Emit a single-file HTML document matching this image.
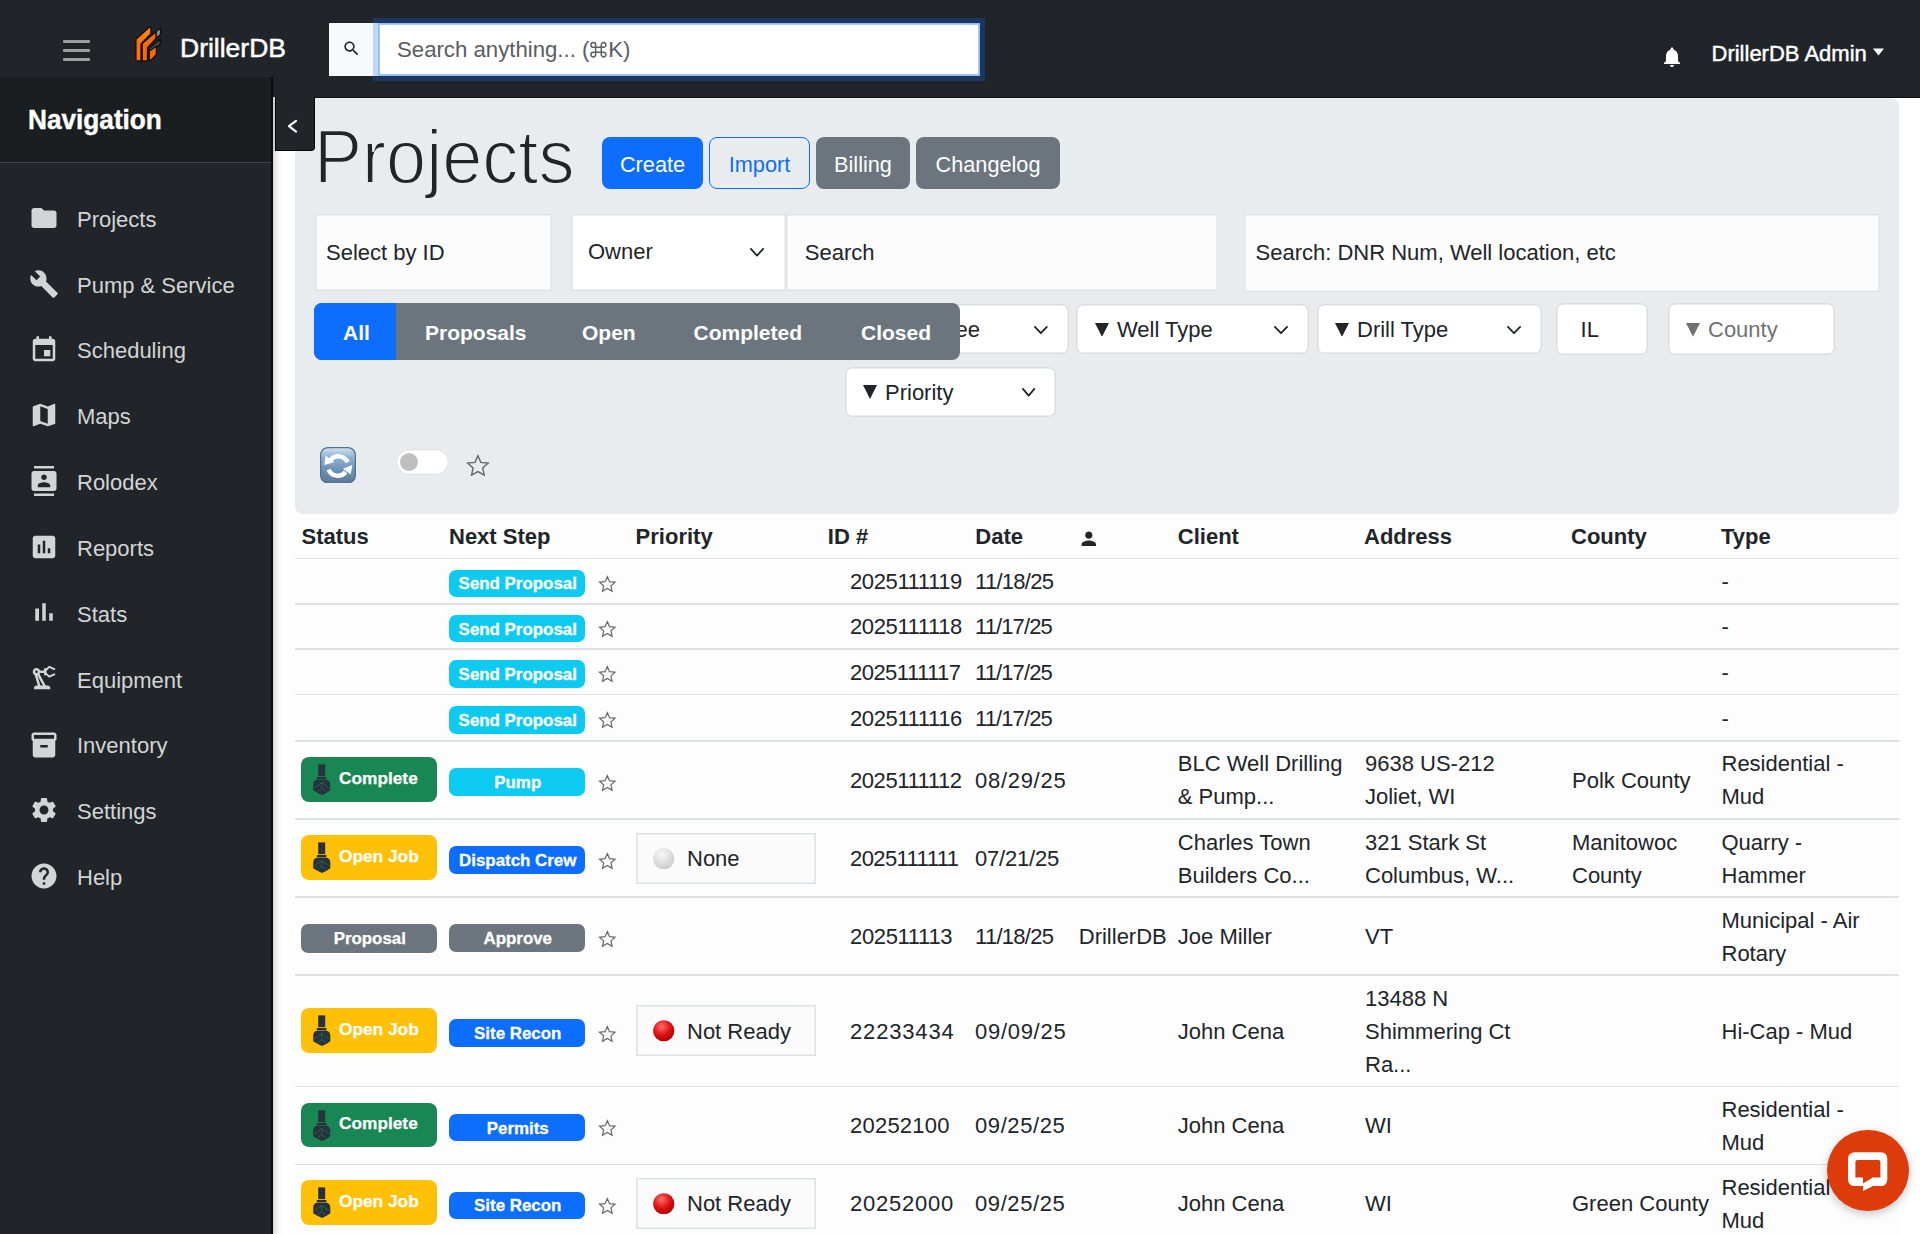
<!DOCTYPE html>
<html><head><meta charset="utf-8"><title>DrillerDB - Projects</title>
<style>
html,body{margin:0;padding:0;width:1920px;height:1234px;overflow:hidden;background:#ffffff}
body{position:relative;font-family:"Liberation Sans",sans-serif}
.a{position:absolute;display:block}
.t{position:absolute;line-height:1;white-space:nowrap}
</style></head><body>
<div class="a" style="left:0.00px;top:0.00px;width:1920.00px;height:1234.00px;background:#ffffff"></div>
<div class="a" style="left:295.00px;top:514.00px;width:1604.00px;height:720.00px;background:#fdfdfd"></div>
<div class="a" style="left:0.00px;top:0.00px;width:1920.00px;height:97.00px;background:#212529"></div>
<div class="a" style="left:0.00px;top:96.50px;width:1920.00px;height:1.50px;background:#0b0c0d"></div>
<div class="a" style="left:63.00px;top:40.25px;width:27.00px;height:2.50px;background:#9c9ea0;border-radius:1px"></div>
<div class="a" style="left:63.00px;top:49.25px;width:27.00px;height:2.50px;background:#9c9ea0;border-radius:1px"></div>
<div class="a" style="left:63.00px;top:58.25px;width:27.00px;height:2.50px;background:#9c9ea0;border-radius:1px"></div>
<svg class="a" style="left:133.00px;top:24.00px;" width="30.00" height="40.00" viewBox="133 24 30 40"><defs><linearGradient id="lg1" x1="0" y1="0" x2="1" y2="0"><stop offset="0" stop-color="#ff6a00"/><stop offset="1" stop-color="#ff8a10"/></linearGradient></defs><g stroke="#0e1114" stroke-width="1.3" stroke-linejoin="round"><polygon fill="url(#lg1)" points="135.9,39.2 149.6,26.9 150.9,27.4 150.9,33.8 141,43.9 141,60.9 135.9,60.9"/><polygon fill="#ff6a00" points="142.2,43.6 156.2,31.5 156.2,38.2 147.5,47.6 147.5,60.9 142.2,60.9"/><polygon fill="#8d8d8d" points="156.2,31.5 160.5,27.8 160.5,34.4 156.2,38.2"/><polygon fill="#444" points="149,48.3 160.3,39.1 160.3,44.2 156.4,47.4 149.3,51"/><polygon fill="#ff6a00" points="149.3,51 156.4,46.2 156.4,54.4 150.1,60.9 149.3,60.9"/></g></svg>
<div class="t" style="left:180.00px;top:35.06px;font-size:26.5px;color:#ffffff;-webkit-text-stroke:0.5px #fff">DrillerDB</div>
<div class="a" style="left:373.00px;top:18.00px;width:612.00px;height:63.00px;background:#1c375e"></div>
<div class="a" style="left:329.00px;top:23.00px;width:44.00px;height:53.00px;background:#f8f9fa"></div>
<div class="a" style="left:373.00px;top:23.00px;width:5.00px;height:53.00px;background:#bfd7f8"></div>
<div class="a" style="left:378.00px;top:23.00px;width:602.00px;height:53.00px;background:#fff;box-shadow:inset 0 0 0 1.8px #8cbbfe"></div>
<svg class="a" style="left:342.00px;top:39.00px;" width="19.00" height="19.00" viewBox="0 0 24 24"><path fill="#212529" d="M15.5 14h-.79l-.28-.27C15.41 12.59 16 11.11 16 9.5 16 5.91 13.09 3 9.5 3S3 5.91 3 9.5 5.91 16 9.5 16c1.61 0 3.09-.59 4.23-1.57l.27.28v.79l5 4.99L20.49 19l-4.99-5zm-6 0C7.01 14 5 11.99 5 9.5S7.01 5 9.5 5 14 7.01 14 9.5 11.99 14 9.5 14z"/></svg>
<div class="t" style="left:397.00px;top:39.20px;font-size:22.2px;color:#5a5d61;">Search anything... (</div>
<svg class="a" style="left:588.00px;top:40.00px;" width="22.00" height="20.00" viewBox="588 40 22 20"><path d="M595.65 47.25 V44.9 A2.35 2.35 0 1 0 593.3 47.25 H603.6 A2.35 2.35 0 1 0 601.25 44.9 V54.6 A2.35 2.35 0 1 0 603.6 52.25 H593.3 A2.35 2.35 0 1 0 595.65 54.6 Z" fill="none" stroke="#5a5d61" stroke-width="1.45" stroke-linejoin="round"/></svg>
<div class="t" style="left:608.30px;top:39.20px;font-size:22.2px;color:#5a5d61;">K)</div>
<svg class="a" style="left:1660.00px;top:45.00px;" width="24.00" height="24.00" viewBox="0 0 24 24"><path fill="#fff" d="M12 22c1.1 0 2-.9 2-2h-4c0 1.1.89 2 2 2zm6-6v-5c0-3.07-1.64-5.64-4.5-6.32V4c0-.83-.67-1.5-1.5-1.5s-1.5.67-1.5 1.5v.68C7.63 5.36 6 7.92 6 11v5l-2 2v1h16v-1l-2-2z"/></svg>
<div class="t" style="left:1711.50px;top:42.87px;font-size:22px;color:#ffffff;-webkit-text-stroke:0.45px #fff">DrillerDB Admin</div>
<svg class="a" style="left:1872.00px;top:47.00px;" width="13.00" height="9.00" viewBox="0 0 13 9"><polygon fill="#fff" points="1,1.4 12,1.4 6.5,8.4"/></svg>
<div class="a" style="left:0.00px;top:77.00px;width:274.00px;height:85.00px;background:#1b1e21"></div>
<div class="a" style="left:0.00px;top:161.50px;width:272.00px;height:1.50px;background:#3d4348"></div>
<div class="a" style="left:0.00px;top:163.00px;width:273.00px;height:1071.00px;background:#212529"></div>
<div class="a" style="left:271.00px;top:77.00px;width:2.00px;height:1157.00px;background:#0a0d10"></div>
<div class="a" style="left:273.00px;top:97.00px;width:2.00px;height:53.00px;background:#cdcdcd"></div>
<div class="a" style="left:273.00px;top:150.00px;width:22.00px;height:1084.00px;background:linear-gradient(to right,#d6d6d6,#eeeeee 3px,#fafafa 7px,#fefefe 10px,#fefefe)"></div>
<div class="t" style="left:28.00px;top:107.32px;font-size:26.2px;color:#ffffff;font-weight:700;-webkit-text-stroke:0.4px #fff;transform:scaleY(1.08);transform-origin:0 21.7px">Navigation</div>
<svg class="a" style="left:28.80px;top:202.90px;" width="30.00" height="30.00" viewBox="0 0 24 24"><path fill="#d3d4d5" d="M10 4H4c-1.1 0-1.99.9-1.99 2L2 18c0 1.1.9 2 2 2h16c1.1 0 2-.9 2-2V8c0-1.1-.9-2-2-2h-8l-2-2z"/></svg>
<div class="t" style="left:77.00px;top:208.67px;font-size:22px;color:#d3d4d5;">Projects</div>
<svg class="a" style="left:28.80px;top:268.50px;" width="30.00" height="30.00" viewBox="0 0 24 24"><path fill="#d3d4d5" d="M22.7 19l-9.1-9.1c.9-2.3.4-5-1.5-6.9-2-2-5-2.4-7.4-1.3L9 6 6 9 1.6 4.7C.4 7.1.9 10.1 2.9 12.1c1.9 1.9 4.6 2.4 6.9 1.5l9.1 9.1c.4.4 1 .4 1.4 0l2.3-2.3c.5-.4.5-1.1.1-1.4z"/></svg>
<div class="t" style="left:77.00px;top:274.52px;font-size:22px;color:#d3d4d5;">Pump &amp; Service</div>
<svg class="a" style="left:28.80px;top:335.00px;" width="30.00" height="30.00" viewBox="0 0 24 24"><path fill="#d3d4d5" d="M17 12h-5v5h5v-5zM16 1v2H8V1H6v2H5c-1.11 0-1.99.9-1.99 2L3 19c0 1.1.89 2 2 2h14c1.1 0 2-.9 2-2V5c0-1.1-.9-2-2-2h-1V1h-2zm3 18H5V8h14v11z"/></svg>
<div class="t" style="left:77.00px;top:340.37px;font-size:22px;color:#d3d4d5;">Scheduling</div>
<svg class="a" style="left:28.80px;top:400.20px;" width="30.00" height="30.00" viewBox="0 0 24 24"><path fill="#d3d4d5" d="M20.5 3l-.16.03L15 5.1 9 3 3.36 4.9c-.21.07-.36.25-.36.48V20.5c0 .28.22.5.5.5l.16-.03L9 18.9l6 2.1 5.64-1.9c.21-.07.36-.25.36-.48V3.5c0-.28-.22-.5-.5-.5zM15 19l-6-2.11V5l6 2.11V19z"/></svg>
<div class="t" style="left:77.00px;top:406.22px;font-size:22px;color:#d3d4d5;">Maps</div>
<svg class="a" style="left:28.80px;top:465.80px;" width="30.00" height="30.00" viewBox="0 0 24 24"><path fill="#d3d4d5" d="M20 0H4v2h16V0zM4 24h16v-2H4v2zM20 4H4c-1.1 0-2 .9-2 2v12c0 1.1.9 2 2 2h16c1.1 0 2-.9 2-2V6c0-1.1-.9-2-2-2zm-8 2.75c1.24 0 2.25 1.01 2.25 2.25s-1.01 2.25-2.25 2.25S9.75 10.24 9.75 9 10.76 6.75 12 6.75zM17 17H7v-1.5c0-1.67 3.33-2.5 5-2.5s5 .83 5 2.5V17z"/></svg>
<div class="t" style="left:77.00px;top:472.07px;font-size:22px;color:#d3d4d5;">Rolodex</div>
<svg class="a" style="left:28.80px;top:532.25px;" width="30.00" height="30.00" viewBox="0 0 24 24"><path fill="#d3d4d5" d="M19 3H5c-1.1 0-2 .9-2 2v14c0 1.1.9 2 2 2h14c1.1 0 2-.9 2-2V5c0-1.1-.9-2-2-2zM9 17H7v-7h2v7zm4 0h-2V7h2v10zm4 0h-2v-4h2v4z"/></svg>
<div class="t" style="left:77.00px;top:537.92px;font-size:22px;color:#d3d4d5;">Reports</div>
<svg class="a" style="left:28.80px;top:596.85px;" width="30.00" height="30.00" viewBox="0 0 24 24"><path fill="#d3d4d5" d="M5 9.2h3V19H5zM10.6 5h2.8v14h-2.8zm5.6 8H19v6h-2.8z"/></svg>
<div class="t" style="left:77.00px;top:603.77px;font-size:22px;color:#d3d4d5;">Stats</div>
<svg class="a" style="left:28.80px;top:663.40px;" width="30.00" height="30.00" viewBox="0 0 24 24"><path fill="#d3d4d5" d="M19.93 8.35l-3.6 1.68L14 7.7V6.3l2.33-2.33 3.6 1.68c.38.18.82.01 1-.36.18-.38.01-.82-.36-1l-3.92-1.83c-.38-.18-.83-.1-1.13.2L13.78 4.4c-.18-.24-.46-.4-.78-.4-.55 0-1 .45-1 1v1H8.82C8.4 4.84 7.3 4 6 4 4.34 4 3 5.34 3 7c0 1.1.6 2.05 1.48 2.58L7.08 18H6c-1.1 0-2 .9-2 2v1h13v-1c0-1.1-.9-2-2-2h-1.62L8.41 8.77c.17-.24.31-.49.41-.77H12v1c0 .55.45 1 1 1 .32 0 .6-.16.78-.4l1.74 1.74c.3.3.75.38 1.13.2l3.92-1.83c.38-.18.54-.62.36-1-.18-.37-.62-.54-1-.36zM6 8c-.55 0-1-.45-1-1s.45-1 1-1 1 .45 1 1-.45 1-1 1zm5.11 10H9.17l-2.46-8h.1l4.3 8z"/></svg>
<div class="t" style="left:77.00px;top:669.62px;font-size:22px;color:#d3d4d5;">Equipment</div>
<svg class="a" style="left:28.80px;top:729.60px;" width="30.00" height="30.00" viewBox="0 0 24 24"><path fill="#d3d4d5" d="M20 2H4c-1 0-2 .9-2 2v3.01c0 .72.43 1.34 1 1.69V20c0 1.1 1.1 2 2 2h14c.9 0 2-.9 2-2V8.7c.57-.35 1-.97 1-1.69V4c0-1.1-1-2-2-2zm-5 12H9v-2h6v2zm5-7H4V4l16-.02V7z"/></svg>
<div class="t" style="left:77.00px;top:735.47px;font-size:22px;color:#d3d4d5;">Inventory</div>
<svg class="a" style="left:28.80px;top:795.40px;" width="30.00" height="30.00" viewBox="0 0 24 24"><path fill="#d3d4d5" d="M19.14 12.94c.04-.3.06-.61.06-.94 0-.32-.02-.64-.07-.94l2.03-1.58c.18-.14.23-.41.12-.61l-1.92-3.32c-.12-.22-.37-.29-.59-.22l-2.39.96c-.5-.38-1.03-.7-1.62-.94l-.36-2.54c-.04-.24-.24-.41-.48-.41h-3.84c-.24 0-.43.17-.47.41l-.36 2.54c-.59.24-1.13.57-1.62.94l-2.39-.96c-.22-.08-.47 0-.59.22L2.74 8.87c-.12.21-.08.47.12.61l2.03 1.58c-.05.3-.09.63-.09.94s.02.64.07.94l-2.03 1.58c-.18.14-.23.41-.12.61l1.92 3.32c.12.22.37.29.59.22l2.39-.96c.5.38 1.03.7 1.62.94l.36 2.54c.05.24.24.41.48.41h3.84c.24 0 .44-.17.47-.41l.36-2.54c.59-.24 1.13-.56 1.62-.94l2.39.96c.22.08.47 0 .59-.22l1.92-3.32c.12-.22.07-.47-.12-.61l-2.01-1.58zM12 15.6c-1.98 0-3.6-1.62-3.6-3.6s1.62-3.6 3.6-3.6 3.6 1.62 3.6 3.6-1.62 3.6-3.6 3.6z"/></svg>
<div class="t" style="left:77.00px;top:801.32px;font-size:22px;color:#d3d4d5;">Settings</div>
<svg class="a" style="left:28.80px;top:861.00px;" width="30.00" height="30.00" viewBox="0 0 24 24"><path fill="#d3d4d5" d="M12 2C6.48 2 2 6.48 2 12s4.48 10 10 10 10-4.48 10-10S17.52 2 12 2zm1 17h-2v-2h2v2zm2.07-7.75l-.9.92C13.45 12.9 13 13.5 13 15h-2v-.5c0-1.1.45-2.1 1.17-2.83l1.24-1.26c.37-.36.59-.86.59-1.41 0-1.1-.9-2-2-2s-2 .9-2 2H8c0-2.21 1.79-4 4-4s4 1.79 4 4c0 .88-.36 1.68-.93 2.25z"/></svg>
<div class="t" style="left:77.00px;top:867.17px;font-size:22px;color:#d3d4d5;">Help</div>
<div class="a" style="left:295.00px;top:98.00px;width:1604.00px;height:415.50px;background:#e9ecef;border-radius:0 8px 8px 8px"></div>
<div class="a" style="left:275.00px;top:97.00px;width:40.00px;height:53.50px;background:#212529;border:1.3px solid #050505;border-top:none;border-radius:0 0 4px 0;box-sizing:border-box"></div>
<svg class="a" style="left:284.00px;top:116.00px;" width="16.00" height="20.00" viewBox="284 116 16 20"><polyline points="296,120.8 289,126.2 296,131.6" fill="none" stroke="#fff" stroke-width="2.2" stroke-linecap="round" stroke-linejoin="round"/></svg>
<div class="t" style="left:314.00px;top:122.45px;font-size:72.1px;color:#212529;-webkit-text-stroke:1.8px #e9ecef;transform:scaleY(1.065);transform-origin:0 61.05px">Projects</div>
<div class="a" style="left:602.00px;top:137.00px;width:101.00px;height:52.00px;background:#0d6efd;border-radius:8px"></div>
<div class="t" style="left:602.00px;top:154.13px;width:101.00px;text-align:center;font-size:21.7px;color:#fff;">Create</div>
<div class="a" style="left:709.00px;top:137.00px;width:101.00px;height:52.00px;border:1.5px solid #0d6efd;border-radius:8px;box-sizing:border-box"></div>
<div class="t" style="left:709.00px;top:154.13px;width:101.00px;text-align:center;font-size:21.7px;color:#0d6efd;">Import</div>
<div class="a" style="left:816.00px;top:137.00px;width:94.00px;height:52.00px;background:#6c757d;border-radius:8px"></div>
<div class="t" style="left:816.00px;top:154.13px;width:94.00px;text-align:center;font-size:21.7px;color:#fff;">Billing</div>
<div class="a" style="left:916.00px;top:137.00px;width:144.00px;height:52.00px;background:#6c757d;border-radius:8px"></div>
<div class="t" style="left:916.00px;top:154.13px;width:144.00px;text-align:center;font-size:21.7px;color:#fff;">Changelog</div>
<div class="a" style="left:314.50px;top:213.50px;width:237.50px;height:77.50px;background:#fcfcfc;box-shadow:inset 0 0 0 1.5px #dfe2e6;"></div>
<div class="t" style="left:326.00px;top:242.27px;font-size:22px;color:#212529;">Select by ID</div>
<div class="a" style="left:571.00px;top:213.50px;width:215.00px;height:77.50px;background:#ffffff;box-shadow:inset 0 0 0 1.5px #dfe2e6;"></div>
<div class="t" style="left:588.00px;top:241.17px;font-size:22px;color:#212529;">Owner</div>
<svg class="a" style="left:748.00px;top:246.00px" width="18.00" height="12.50" viewBox="748 246 18 12.5"><polyline points="750.90,248.90 757.00,255.60 763.10,248.90" fill="none" stroke="#212529" stroke-width="1.8" stroke-linecap="round" stroke-linejoin="round"/></svg>
<div class="a" style="left:786.00px;top:213.50px;width:432.30px;height:77.50px;background:#fcfcfc;box-shadow:inset 0 0 0 1.5px #dfe2e6;"></div>
<div class="t" style="left:804.80px;top:241.87px;font-size:22px;color:#212529;">Search</div>
<div class="a" style="left:1244.00px;top:213.50px;width:635.60px;height:78.00px;background:#fcfcfc;box-shadow:inset 0 0 0 1.5px #dfe2e6;"></div>
<div class="t" style="left:1255.50px;top:242.07px;font-size:22px;color:#212529;">Search: DNR Num, Well location, etc</div>
<div class="a" style="left:860.00px;top:304.00px;width:208.50px;height:49.50px;background:#fff;border-radius:7px;box-shadow:inset 0 0 0 1.5px #d9dce0;"></div>
<div class="t" style="right:940.00px;top:318.87px;font-size:22px;color:#212529;">Assignee</div>
<svg class="a" style="left:1032.00px;top:323.50px" width="17.70" height="12.00" viewBox="1032 323.5 17.700000000000045 12.0"><polyline points="1034.90,326.40 1040.85,332.60 1046.80,326.40" fill="none" stroke="#212529" stroke-width="1.8" stroke-linecap="round" stroke-linejoin="round"/></svg>
<div class="a" style="left:1076.00px;top:304.30px;width:232.70px;height:49.50px;background:#fff;border-radius:7px;box-shadow:inset 0 0 0 1.5px #d9dce0;"></div>
<svg class="a" style="left:1095.00px;top:322.50px" width="14.00" height="13.90" viewBox="0 0 14.00 13.90"><polygon points="0,0 14.00,0 7.00,13.90" fill="#212529"/></svg>
<div class="t" style="left:1117.00px;top:318.87px;font-size:22px;color:#212529;">Well Type</div>
<svg class="a" style="left:1272.00px;top:323.50px" width="18.00" height="12.00" viewBox="1272 323.5 18 12.0"><polyline points="1274.90,326.40 1281.00,332.60 1287.10,326.40" fill="none" stroke="#212529" stroke-width="1.8" stroke-linecap="round" stroke-linejoin="round"/></svg>
<div class="a" style="left:1316.50px;top:304.30px;width:225.30px;height:49.50px;background:#fff;border-radius:7px;box-shadow:inset 0 0 0 1.5px #d9dce0;"></div>
<svg class="a" style="left:1335.00px;top:322.50px" width="14.00" height="13.90" viewBox="0 0 14.00 13.90"><polygon points="0,0 14.00,0 7.00,13.90" fill="#212529"/></svg>
<div class="t" style="left:1357.00px;top:318.87px;font-size:22px;color:#212529;">Drill Type</div>
<svg class="a" style="left:1505.00px;top:323.50px" width="18.00" height="12.00" viewBox="1505 323.5 18 12.0"><polyline points="1507.90,326.40 1514.00,332.60 1520.10,326.40" fill="none" stroke="#212529" stroke-width="1.8" stroke-linecap="round" stroke-linejoin="round"/></svg>
<div class="a" style="left:1555.80px;top:303.00px;width:92.20px;height:51.80px;background:#fff;border-radius:7px;box-shadow:inset 0 0 0 1.5px #d9dce0;"></div>
<div class="t" style="left:1580.60px;top:318.87px;font-size:22px;color:#212529;">IL</div>
<div class="a" style="left:1668.30px;top:303.00px;width:166.40px;height:51.80px;background:#fff;border-radius:7px;box-shadow:inset 0 0 0 1.5px #d9dce0;"></div>
<svg class="a" style="left:1686.00px;top:322.80px" width="14.00" height="13.80" viewBox="0 0 14.00 13.80"><polygon points="0,0 14.00,0 7.00,13.80" fill="#6f7275"/></svg>
<div class="t" style="left:1708.00px;top:318.87px;font-size:22px;color:#6f7275;">County</div>
<div class="a" style="left:314.20px;top:303.00px;width:645.40px;height:57.40px;background:#6c757d;border-radius:8px"></div>
<div class="a" style="left:314.20px;top:303.00px;width:82.10px;height:57.40px;background:#0d6efd;border-radius:8px 0 0 8px"></div>
<div class="t" style="left:343.00px;top:321.72px;font-size:21px;color:#fff;font-weight:700;">All</div>
<div class="t" style="left:425.00px;top:321.72px;font-size:21px;color:#fff;font-weight:700;">Proposals</div>
<div class="t" style="left:582.00px;top:321.72px;font-size:21px;color:#fff;font-weight:700;">Open</div>
<div class="t" style="left:693.50px;top:321.72px;font-size:21px;color:#fff;font-weight:700;">Completed</div>
<div class="t" style="left:861.00px;top:321.72px;font-size:21px;color:#fff;font-weight:700;">Closed</div>
<div class="a" style="left:844.60px;top:367.00px;width:211.40px;height:49.70px;background:#fff;border-radius:7px;box-shadow:inset 0 0 0 1.5px #d9dce0;"></div>
<svg class="a" style="left:863.00px;top:385.40px" width="14.00" height="14.00" viewBox="0 0 14.00 14.00"><polygon points="0,0 14.00,0 7.00,14.00" fill="#212529"/></svg>
<div class="t" style="left:885.00px;top:382.27px;font-size:22px;color:#212529;">Priority</div>
<svg class="a" style="left:1019.70px;top:386.00px" width="17.30" height="12.50" viewBox="1019.7 386 17.299999999999955 12.5"><polyline points="1022.60,388.90 1028.35,395.60 1034.10,388.90" fill="none" stroke="#212529" stroke-width="1.8" stroke-linecap="round" stroke-linejoin="round"/></svg>
<svg class="a" style="left:320px;top:446.5px" width="36" height="36.5" viewBox="0 0 36 36.5">
<defs><linearGradient id="rg" x1="0" y1="0" x2="0" y2="1"><stop offset="0" stop-color="#d2e2ee"/><stop offset="0.28" stop-color="#8fb1d2"/><stop offset="0.6" stop-color="#7094b9"/><stop offset="1" stop-color="#5b7895"/></linearGradient></defs>
<rect x="0.6" y="0.6" width="34.8" height="35.3" rx="7.5" fill="url(#rg)" stroke="#4f7398" stroke-width="1.2"/>
<path d="M27.6 15.3 A10 10 0 0 0 10.2 13.6" fill="none" stroke="#fff" stroke-width="4.4"/>
<polygon points="4.3,17.9 5.6,8.6 14.2,15.2" fill="#fff"/>
<path d="M8.6 22.6 A10 10 0 0 0 25.6 25" fill="none" stroke="#fff" stroke-width="4.4"/>
<polygon points="32.4,18.1 30.6,27.6 22.9,21.7" fill="#fff"/>
</svg>
<div class="a" style="left:395.80px;top:448.75px;width:53.20px;height:26.65px;background:#fff;border-radius:14px;box-shadow:inset 0 0 0 1.3px #dee2e6"></div>
<div class="a" style="left:399.6px;top:452.9px;width:18.3px;height:18.3px;border-radius:50%;background:#bfbfbf"></div>
<svg class="a" style="left:464.70px;top:452.60px" width="25.80" height="23.80"><polygon points="12.90,2.70 15.87,9.37 23.13,10.14 17.71,15.02 19.23,22.17 12.90,18.52 6.57,22.17 8.09,15.02 2.67,10.14 9.93,9.37" fill="none" stroke="#666666" stroke-width="1.4" stroke-linejoin="miter"/></svg>
<div class="t" style="left:301.50px;top:525.87px;font-size:22px;color:#212529;font-weight:700;">Status</div>
<div class="t" style="left:449.00px;top:525.87px;font-size:22px;color:#212529;font-weight:700;">Next Step</div>
<div class="t" style="left:635.60px;top:525.87px;font-size:22px;color:#212529;font-weight:700;">Priority</div>
<div class="t" style="left:827.80px;top:525.87px;font-size:22px;color:#212529;font-weight:700;">ID #</div>
<div class="t" style="left:975.30px;top:525.87px;font-size:22px;color:#212529;font-weight:700;">Date</div>
<div class="t" style="left:1177.80px;top:525.87px;font-size:22px;color:#212529;font-weight:700;">Client</div>
<div class="t" style="left:1364.00px;top:525.87px;font-size:22px;color:#212529;font-weight:700;">Address</div>
<div class="t" style="left:1571.00px;top:525.87px;font-size:22px;color:#212529;font-weight:700;">County</div>
<div class="t" style="left:1721.00px;top:525.87px;font-size:22px;color:#212529;font-weight:700;">Type</div>
<svg class="a" style="left:1078.10px;top:527.90px;" width="21.60" height="21.60" viewBox="0 0 24 24"><path fill="#212529" d="M12 12c2.21 0 4-1.79 4-4s-1.79-4-4-4-4 1.79-4 4 1.79 4 4 4zm0 2c-2.67 0-8 1.34-8 4v2h16v-2c0-2.66-5.33-4-8-4z"/></svg>
<div class="a" style="left:295.00px;top:557.60px;width:1604.00px;height:1.60px;background:#dee2e6"></div>
<div class="a" style="left:295.00px;top:603.05px;width:1604.00px;height:1.50px;background:#dee2e6"></div>
<div class="a" style="left:295.00px;top:648.25px;width:1604.00px;height:1.50px;background:#dee2e6"></div>
<div class="a" style="left:295.00px;top:693.55px;width:1604.00px;height:1.50px;background:#dee2e6"></div>
<div class="a" style="left:295.00px;top:740.05px;width:1604.00px;height:1.50px;background:#dee2e6"></div>
<div class="a" style="left:295.00px;top:818.25px;width:1604.00px;height:1.50px;background:#dee2e6"></div>
<div class="a" style="left:295.00px;top:896.25px;width:1604.00px;height:1.50px;background:#dee2e6"></div>
<div class="a" style="left:295.00px;top:974.45px;width:1604.00px;height:1.50px;background:#dee2e6"></div>
<div class="a" style="left:295.00px;top:1085.85px;width:1604.00px;height:1.50px;background:#dee2e6"></div>
<div class="a" style="left:295.00px;top:1163.65px;width:1604.00px;height:1.50px;background:#dee2e6"></div>
<div class="a" style="left:448.75px;top:569.70px;width:136.45px;height:27.70px;background:#0dcaf0;border-radius:7px"></div>
<div class="t" style="left:449.50px;top:576.49px;width:136.50px;text-align:center;font-size:16.9px;color:#fff;font-weight:700;-webkit-text-stroke:0.3px #fff">Send Proposal</div>
<svg class="a" style="left:597.40px;top:573.90px" width="20.60" height="19.80"><polygon points="10.30,2.60 12.55,7.64 18.03,8.22 13.93,11.91 15.08,17.30 10.30,14.55 5.52,17.30 6.67,11.91 2.57,8.22 8.05,7.64" fill="none" stroke="#666666" stroke-width="1.2" stroke-linejoin="miter"/></svg>
<div class="t" style="left:850.00px;top:571.37px;font-size:22px;color:#212529;letter-spacing:-0.389px;">2025111119</div>
<div class="t" style="left:975.00px;top:571.37px;font-size:22px;color:#212529;letter-spacing:-0.714px;">11/18/25</div>
<div class="t" style="left:1721.50px;top:571.37px;font-size:22px;color:#212529;">-</div>
<div class="a" style="left:448.75px;top:614.80px;width:136.45px;height:27.70px;background:#0dcaf0;border-radius:7px"></div>
<div class="t" style="left:449.50px;top:621.59px;width:136.50px;text-align:center;font-size:16.9px;color:#fff;font-weight:700;-webkit-text-stroke:0.3px #fff">Send Proposal</div>
<svg class="a" style="left:597.40px;top:619.00px" width="20.60" height="19.80"><polygon points="10.30,2.60 12.55,7.64 18.03,8.22 13.93,11.91 15.08,17.30 10.30,14.55 5.52,17.30 6.67,11.91 2.57,8.22 8.05,7.64" fill="none" stroke="#666666" stroke-width="1.2" stroke-linejoin="miter"/></svg>
<div class="t" style="left:850.00px;top:616.47px;font-size:22px;color:#212529;letter-spacing:-0.389px;">2025111118</div>
<div class="t" style="left:975.00px;top:616.47px;font-size:22px;color:#212529;letter-spacing:-0.900px;">11/17/25</div>
<div class="t" style="left:1721.50px;top:616.47px;font-size:22px;color:#212529;">-</div>
<div class="a" style="left:448.75px;top:660.05px;width:136.45px;height:27.70px;background:#0dcaf0;border-radius:7px"></div>
<div class="t" style="left:449.50px;top:666.84px;width:136.50px;text-align:center;font-size:16.9px;color:#fff;font-weight:700;-webkit-text-stroke:0.3px #fff">Send Proposal</div>
<svg class="a" style="left:597.40px;top:664.25px" width="20.60" height="19.80"><polygon points="10.30,2.60 12.55,7.64 18.03,8.22 13.93,11.91 15.08,17.30 10.30,14.55 5.52,17.30 6.67,11.91 2.57,8.22 8.05,7.64" fill="none" stroke="#666666" stroke-width="1.2" stroke-linejoin="miter"/></svg>
<div class="t" style="left:850.00px;top:661.72px;font-size:22px;color:#212529;letter-spacing:-0.533px;">2025111117</div>
<div class="t" style="left:975.00px;top:661.72px;font-size:22px;color:#212529;letter-spacing:-0.900px;">11/17/25</div>
<div class="t" style="left:1721.50px;top:661.72px;font-size:22px;color:#212529;">-</div>
<div class="a" style="left:448.75px;top:705.95px;width:136.45px;height:27.70px;background:#0dcaf0;border-radius:7px"></div>
<div class="t" style="left:449.50px;top:712.74px;width:136.50px;text-align:center;font-size:16.9px;color:#fff;font-weight:700;-webkit-text-stroke:0.3px #fff">Send Proposal</div>
<svg class="a" style="left:597.40px;top:710.15px" width="20.60" height="19.80"><polygon points="10.30,2.60 12.55,7.64 18.03,8.22 13.93,11.91 15.08,17.30 10.30,14.55 5.52,17.30 6.67,11.91 2.57,8.22 8.05,7.64" fill="none" stroke="#666666" stroke-width="1.2" stroke-linejoin="miter"/></svg>
<div class="t" style="left:850.00px;top:707.62px;font-size:22px;color:#212529;letter-spacing:-0.389px;">2025111116</div>
<div class="t" style="left:975.00px;top:707.62px;font-size:22px;color:#212529;letter-spacing:-0.900px;">11/17/25</div>
<div class="t" style="left:1721.50px;top:707.62px;font-size:22px;color:#212529;">-</div>
<div class="a" style="left:300.60px;top:757.00px;width:136.40px;height:44.50px;background:#198754;border-radius:8px"></div>
<svg class="a" style="left:312.80px;top:764.10px" width="18" height="31" viewBox="0 0 18 31">
<g fill="#29313d"><rect x="5.2" y="0.4" width="7" height="11.8"/><rect x="3.8" y="13" width="9.6" height="2"/>
<path d="M4.2 15.6 H13.2 Q17.3 16.4 17.3 20.8 V26.3 L13.2 29 Q11 30.2 9 31 Q7 30.2 4.8 29 L0.2 26.3 V20.8 Q0.2 16.4 4.2 15.6 Z"/></g>
<path d="M1 24 L8.7 18.6 M16.4 24 L8.7 18.6 M8.7 18.6 V24 M4.8 27.6 L8.7 24.5 L12.6 27.6" stroke="#1e8a56" stroke-width="0.7" fill="none" opacity="0.8"/>
</svg>
<div class="t" style="left:339.00px;top:769.95px;font-size:17.3px;color:#fff;font-weight:700;-webkit-text-stroke:0.25px #fff">Complete</div>
<div class="a" style="left:448.75px;top:768.30px;width:136.45px;height:27.70px;background:#0dcaf0;border-radius:7px"></div>
<div class="t" style="left:449.50px;top:775.09px;width:136.50px;text-align:center;font-size:16.9px;color:#fff;font-weight:700;-webkit-text-stroke:0.3px #fff">Pump</div>
<svg class="a" style="left:597.40px;top:772.50px" width="20.60" height="19.80"><polygon points="10.30,2.60 12.55,7.64 18.03,8.22 13.93,11.91 15.08,17.30 10.30,14.55 5.52,17.30 6.67,11.91 2.57,8.22 8.05,7.64" fill="none" stroke="#666666" stroke-width="1.2" stroke-linejoin="miter"/></svg>
<div class="t" style="left:850.00px;top:769.97px;font-size:22px;color:#212529;letter-spacing:-0.433px;">2025111112</div>
<div class="t" style="left:975.00px;top:769.97px;font-size:22px;color:#212529;letter-spacing:0.714px;">08/29/25</div>
<div class="t" style="left:1177.80px;top:753.47px;font-size:22px;color:#212529;">BLC Well Drilling</div>
<div class="t" style="left:1177.80px;top:786.47px;font-size:22px;color:#212529;">&amp; Pump...</div>
<div class="t" style="left:1365.00px;top:753.47px;font-size:22px;color:#212529;">9638 US-212</div>
<div class="t" style="left:1365.00px;top:786.47px;font-size:22px;color:#212529;">Joliet, WI</div>
<div class="t" style="left:1572.00px;top:769.97px;font-size:22px;color:#212529;">Polk County</div>
<div class="t" style="left:1721.50px;top:753.47px;font-size:22px;color:#212529;">Residential -</div>
<div class="t" style="left:1721.50px;top:786.47px;font-size:22px;color:#212529;">Mud</div>
<div class="a" style="left:300.60px;top:835.10px;width:136.40px;height:44.50px;background:#ffc107;border-radius:8px"></div>
<svg class="a" style="left:312.80px;top:842.20px" width="18" height="31" viewBox="0 0 18 31">
<g fill="#29313d"><rect x="5.2" y="0.4" width="7" height="11.8"/><rect x="3.8" y="13" width="9.6" height="2"/>
<path d="M4.2 15.6 H13.2 Q17.3 16.4 17.3 20.8 V26.3 L13.2 29 Q11 30.2 9 31 Q7 30.2 4.8 29 L0.2 26.3 V20.8 Q0.2 16.4 4.2 15.6 Z"/></g>
<path d="M1 24 L8.7 18.6 M16.4 24 L8.7 18.6 M8.7 18.6 V24 M4.8 27.6 L8.7 24.5 L12.6 27.6" stroke="#1e8a56" stroke-width="0.7" fill="none" opacity="0.8"/>
</svg>
<div class="t" style="left:339.00px;top:848.05px;font-size:17.3px;color:#fff;font-weight:700;-webkit-text-stroke:0.25px #fff">Open Job</div>
<div class="a" style="left:448.75px;top:846.40px;width:136.45px;height:27.70px;background:#0d6efd;border-radius:7px"></div>
<div class="t" style="left:449.50px;top:853.19px;width:136.50px;text-align:center;font-size:16.9px;color:#fff;font-weight:700;-webkit-text-stroke:0.3px #fff">Dispatch Crew</div>
<svg class="a" style="left:597.40px;top:850.60px" width="20.60" height="19.80"><polygon points="10.30,2.60 12.55,7.64 18.03,8.22 13.93,11.91 15.08,17.30 10.30,14.55 5.52,17.30 6.67,11.91 2.57,8.22 8.05,7.64" fill="none" stroke="#666666" stroke-width="1.2" stroke-linejoin="miter"/></svg>
<div class="a" style="left:635.50px;top:832.50px;width:180.00px;height:51.10px;background:#fbfbfb;box-shadow:inset 0 0 0 1.5px #dee2e6"></div>
<svg class="a" style="left:653px;top:847.50px" width="21.5" height="21.5" viewBox="0 0 21.5 21.5"><defs><radialGradient id="gg" cx="0.4" cy="0.3" r="0.75"><stop offset="0" stop-color="#f7f7f7"/><stop offset="1" stop-color="#c9c9c9"/></radialGradient></defs><circle cx="10.75" cy="10.75" r="10.6" fill="url(#gg)"/></svg>
<div class="t" style="left:687.00px;top:848.07px;font-size:22px;color:#212529;">None</div>
<div class="t" style="left:850.00px;top:848.07px;font-size:22px;color:#212529;letter-spacing:-0.589px;">2025111111</div>
<div class="t" style="left:975.00px;top:848.07px;font-size:22px;color:#212529;letter-spacing:-0.200px;">07/21/25</div>
<div class="t" style="left:1177.80px;top:831.57px;font-size:22px;color:#212529;">Charles Town</div>
<div class="t" style="left:1177.80px;top:864.57px;font-size:22px;color:#212529;">Builders Co...</div>
<div class="t" style="left:1365.00px;top:831.57px;font-size:22px;color:#212529;">321 Stark St</div>
<div class="t" style="left:1365.00px;top:864.57px;font-size:22px;color:#212529;">Columbus, W...</div>
<div class="t" style="left:1572.00px;top:831.57px;font-size:22px;color:#212529;">Manitowoc</div>
<div class="t" style="left:1572.00px;top:864.57px;font-size:22px;color:#212529;">County</div>
<div class="t" style="left:1721.50px;top:831.57px;font-size:22px;color:#212529;">Quarry -</div>
<div class="t" style="left:1721.50px;top:864.57px;font-size:22px;color:#212529;">Hammer</div>
<div class="a" style="left:300.60px;top:924.20px;width:136.40px;height:28.40px;background:#6c757d;border-radius:7px"></div>
<div class="t" style="left:301.60px;top:930.89px;width:136.40px;text-align:center;font-size:16.9px;color:#fff;font-weight:700;-webkit-text-stroke:0.25px #fff">Proposal</div>
<div class="a" style="left:448.75px;top:924.40px;width:136.45px;height:27.70px;background:#6c757d;border-radius:7px"></div>
<div class="t" style="left:449.50px;top:931.19px;width:136.50px;text-align:center;font-size:16.9px;color:#fff;font-weight:700;-webkit-text-stroke:0.3px #fff">Approve</div>
<svg class="a" style="left:597.40px;top:928.60px" width="20.60" height="19.80"><polygon points="10.30,2.60 12.55,7.64 18.03,8.22 13.93,11.91 15.08,17.30 10.30,14.55 5.52,17.30 6.67,11.91 2.57,8.22 8.05,7.64" fill="none" stroke="#666666" stroke-width="1.2" stroke-linejoin="miter"/></svg>
<div class="t" style="left:850.00px;top:926.07px;font-size:22px;color:#212529;letter-spacing:-0.338px;">202511113</div>
<div class="t" style="left:975.00px;top:926.07px;font-size:22px;color:#212529;letter-spacing:-0.714px;">11/18/25</div>
<div class="t" style="left:1078.75px;top:926.07px;font-size:22px;color:#212529;">DrillerDB</div>
<div class="t" style="left:1177.80px;top:926.07px;font-size:22px;color:#212529;">Joe Miller</div>
<div class="t" style="left:1365.00px;top:926.07px;font-size:22px;color:#212529;">VT</div>
<div class="t" style="left:1721.50px;top:909.57px;font-size:22px;color:#212529;">Municipal - Air</div>
<div class="t" style="left:1721.50px;top:942.57px;font-size:22px;color:#212529;">Rotary</div>
<div class="a" style="left:300.60px;top:1008.00px;width:136.40px;height:44.50px;background:#ffc107;border-radius:8px"></div>
<svg class="a" style="left:312.80px;top:1015.10px" width="18" height="31" viewBox="0 0 18 31">
<g fill="#29313d"><rect x="5.2" y="0.4" width="7" height="11.8"/><rect x="3.8" y="13" width="9.6" height="2"/>
<path d="M4.2 15.6 H13.2 Q17.3 16.4 17.3 20.8 V26.3 L13.2 29 Q11 30.2 9 31 Q7 30.2 4.8 29 L0.2 26.3 V20.8 Q0.2 16.4 4.2 15.6 Z"/></g>
<path d="M1 24 L8.7 18.6 M16.4 24 L8.7 18.6 M8.7 18.6 V24 M4.8 27.6 L8.7 24.5 L12.6 27.6" stroke="#1e8a56" stroke-width="0.7" fill="none" opacity="0.8"/>
</svg>
<div class="t" style="left:339.00px;top:1020.95px;font-size:17.3px;color:#fff;font-weight:700;-webkit-text-stroke:0.25px #fff">Open Job</div>
<div class="a" style="left:448.75px;top:1019.30px;width:136.45px;height:27.70px;background:#0d6efd;border-radius:7px"></div>
<div class="t" style="left:449.50px;top:1026.09px;width:136.50px;text-align:center;font-size:16.9px;color:#fff;font-weight:700;-webkit-text-stroke:0.3px #fff">Site Recon</div>
<svg class="a" style="left:597.40px;top:1023.50px" width="20.60" height="19.80"><polygon points="10.30,2.60 12.55,7.64 18.03,8.22 13.93,11.91 15.08,17.30 10.30,14.55 5.52,17.30 6.67,11.91 2.57,8.22 8.05,7.64" fill="none" stroke="#666666" stroke-width="1.2" stroke-linejoin="miter"/></svg>
<div class="a" style="left:635.50px;top:1005.40px;width:180.00px;height:51.10px;background:#fbfbfb;box-shadow:inset 0 0 0 1.5px #dee2e6"></div>
<svg class="a" style="left:653px;top:1020.40px" width="21.5" height="21.5" viewBox="0 0 21.5 21.5"><defs><radialGradient id="rdg" cx="0.4" cy="0.3" r="0.75"><stop offset="0" stop-color="#ff6b6b"/><stop offset="0.55" stop-color="#e01010"/><stop offset="1" stop-color="#a50000"/></radialGradient></defs><circle cx="10.75" cy="10.75" r="10.6" fill="url(#rdg)"/></svg>
<div class="t" style="left:687.00px;top:1020.97px;font-size:22px;color:#212529;">Not Ready</div>
<div class="t" style="left:850.00px;top:1020.97px;font-size:22px;color:#212529;letter-spacing:0.829px;">22233434</div>
<div class="t" style="left:975.00px;top:1020.97px;font-size:22px;color:#212529;letter-spacing:0.714px;">09/09/25</div>
<div class="t" style="left:1177.80px;top:1020.97px;font-size:22px;color:#212529;">John Cena</div>
<div class="t" style="left:1365.00px;top:987.97px;font-size:22px;color:#212529;">13488 N</div>
<div class="t" style="left:1365.00px;top:1020.97px;font-size:22px;color:#212529;">Shimmering Ct</div>
<div class="t" style="left:1365.00px;top:1053.97px;font-size:22px;color:#212529;">Ra...</div>
<div class="t" style="left:1721.50px;top:1020.97px;font-size:22px;color:#212529;">Hi-Cap - Mud</div>
<div class="a" style="left:300.60px;top:1102.50px;width:136.40px;height:44.50px;background:#198754;border-radius:8px"></div>
<svg class="a" style="left:312.80px;top:1109.60px" width="18" height="31" viewBox="0 0 18 31">
<g fill="#29313d"><rect x="5.2" y="0.4" width="7" height="11.8"/><rect x="3.8" y="13" width="9.6" height="2"/>
<path d="M4.2 15.6 H13.2 Q17.3 16.4 17.3 20.8 V26.3 L13.2 29 Q11 30.2 9 31 Q7 30.2 4.8 29 L0.2 26.3 V20.8 Q0.2 16.4 4.2 15.6 Z"/></g>
<path d="M1 24 L8.7 18.6 M16.4 24 L8.7 18.6 M8.7 18.6 V24 M4.8 27.6 L8.7 24.5 L12.6 27.6" stroke="#1e8a56" stroke-width="0.7" fill="none" opacity="0.8"/>
</svg>
<div class="t" style="left:339.00px;top:1115.45px;font-size:17.3px;color:#fff;font-weight:700;-webkit-text-stroke:0.25px #fff">Complete</div>
<div class="a" style="left:448.75px;top:1113.80px;width:136.45px;height:27.70px;background:#0d6efd;border-radius:7px"></div>
<div class="t" style="left:449.50px;top:1120.59px;width:136.50px;text-align:center;font-size:16.9px;color:#fff;font-weight:700;-webkit-text-stroke:0.3px #fff">Permits</div>
<svg class="a" style="left:597.40px;top:1118.00px" width="20.60" height="19.80"><polygon points="10.30,2.60 12.55,7.64 18.03,8.22 13.93,11.91 15.08,17.30 10.30,14.55 5.52,17.30 6.67,11.91 2.57,8.22 8.05,7.64" fill="none" stroke="#666666" stroke-width="1.2" stroke-linejoin="miter"/></svg>
<div class="t" style="left:850.00px;top:1115.47px;font-size:22px;color:#212529;letter-spacing:0.229px;">20252100</div>
<div class="t" style="left:975.00px;top:1115.47px;font-size:22px;color:#212529;letter-spacing:0.586px;">09/25/25</div>
<div class="t" style="left:1177.80px;top:1115.47px;font-size:22px;color:#212529;">John Cena</div>
<div class="t" style="left:1365.00px;top:1115.47px;font-size:22px;color:#212529;">WI</div>
<div class="t" style="left:1721.50px;top:1098.97px;font-size:22px;color:#212529;">Residential -</div>
<div class="t" style="left:1721.50px;top:1131.97px;font-size:22px;color:#212529;">Mud</div>
<div class="a" style="left:300.60px;top:1180.30px;width:136.40px;height:44.50px;background:#ffc107;border-radius:8px"></div>
<svg class="a" style="left:312.80px;top:1187.40px" width="18" height="31" viewBox="0 0 18 31">
<g fill="#29313d"><rect x="5.2" y="0.4" width="7" height="11.8"/><rect x="3.8" y="13" width="9.6" height="2"/>
<path d="M4.2 15.6 H13.2 Q17.3 16.4 17.3 20.8 V26.3 L13.2 29 Q11 30.2 9 31 Q7 30.2 4.8 29 L0.2 26.3 V20.8 Q0.2 16.4 4.2 15.6 Z"/></g>
<path d="M1 24 L8.7 18.6 M16.4 24 L8.7 18.6 M8.7 18.6 V24 M4.8 27.6 L8.7 24.5 L12.6 27.6" stroke="#1e8a56" stroke-width="0.7" fill="none" opacity="0.8"/>
</svg>
<div class="t" style="left:339.00px;top:1193.25px;font-size:17.3px;color:#fff;font-weight:700;-webkit-text-stroke:0.25px #fff">Open Job</div>
<div class="a" style="left:448.75px;top:1191.60px;width:136.45px;height:27.70px;background:#0d6efd;border-radius:7px"></div>
<div class="t" style="left:449.50px;top:1198.39px;width:136.50px;text-align:center;font-size:16.9px;color:#fff;font-weight:700;-webkit-text-stroke:0.3px #fff">Site Recon</div>
<svg class="a" style="left:597.40px;top:1195.80px" width="20.60" height="19.80"><polygon points="10.30,2.60 12.55,7.64 18.03,8.22 13.93,11.91 15.08,17.30 10.30,14.55 5.52,17.30 6.67,11.91 2.57,8.22 8.05,7.64" fill="none" stroke="#666666" stroke-width="1.2" stroke-linejoin="miter"/></svg>
<div class="a" style="left:635.50px;top:1177.70px;width:180.00px;height:51.10px;background:#fbfbfb;box-shadow:inset 0 0 0 1.5px #dee2e6"></div>
<svg class="a" style="left:653px;top:1192.70px" width="21.5" height="21.5" viewBox="0 0 21.5 21.5"><defs><radialGradient id="rdg" cx="0.4" cy="0.3" r="0.75"><stop offset="0" stop-color="#ff6b6b"/><stop offset="0.55" stop-color="#e01010"/><stop offset="1" stop-color="#a50000"/></radialGradient></defs><circle cx="10.75" cy="10.75" r="10.6" fill="url(#rdg)"/></svg>
<div class="t" style="left:687.00px;top:1193.27px;font-size:22px;color:#212529;">Not Ready</div>
<div class="t" style="left:850.00px;top:1193.27px;font-size:22px;color:#212529;letter-spacing:0.771px;">20252000</div>
<div class="t" style="left:975.00px;top:1193.27px;font-size:22px;color:#212529;letter-spacing:0.586px;">09/25/25</div>
<div class="t" style="left:1177.80px;top:1193.27px;font-size:22px;color:#212529;">John Cena</div>
<div class="t" style="left:1365.00px;top:1193.27px;font-size:22px;color:#212529;">WI</div>
<div class="t" style="left:1572.00px;top:1193.27px;font-size:22px;color:#212529;">Green County</div>
<div class="t" style="left:1721.50px;top:1176.77px;font-size:22px;color:#212529;">Residential -</div>
<div class="t" style="left:1721.50px;top:1209.77px;font-size:22px;color:#212529;">Mud</div>
<div class="a" style="left:1827.3px;top:1130px;width:81.4px;height:81.4px;border-radius:50%;background:#dd3c0a;box-shadow:0 3px 10px rgba(0,0,0,0.22)"></div>
<svg class="a" style="left:1846px;top:1150px" width="44" height="44" viewBox="0 0 44 44">
<path d="M9.5 2.2 H34.5 Q41.3 2.2 41.3 9 V29.3 Q41.3 36.1 34.5 36.1 H27 L17 41.1 V36.1 H9 Q2 36.1 2 29.3 V9 Q2 2.2 9.5 2.2 Z M11.4 9.9 Q9.4 9.9 9.4 11.9 V27.4 H17 V33.6 L26.8 27.4 H34.4 V11.9 Q34.4 9.9 32.4 9.9 Z" fill="#fff" fill-rule="evenodd"/>
</svg>
</body></html>
